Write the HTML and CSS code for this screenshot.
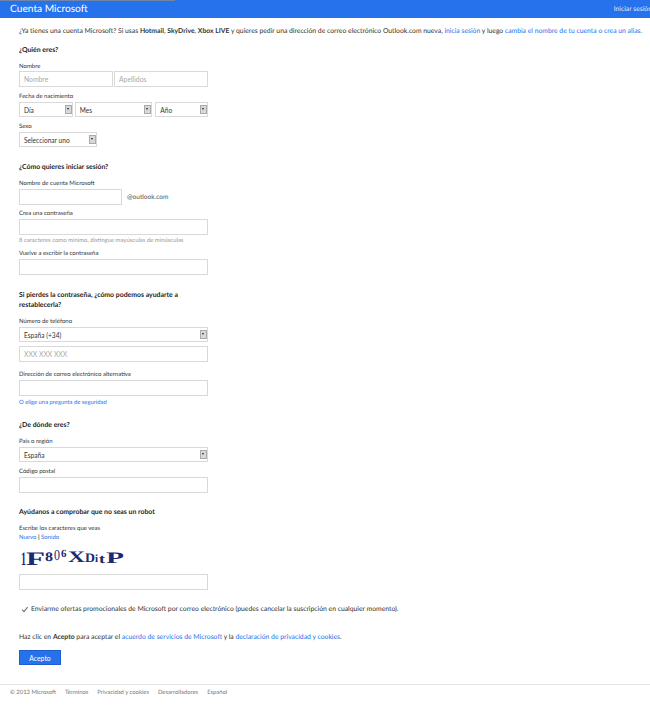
FILE: index.html
```html
<!DOCTYPE html>
<html lang="es">
<head>
    <meta charset="UTF-8">
    <title>Cuenta Microsoft</title>
    <link rel="stylesheet" href="styles.css">
</head>
<body>
    <header class="topbar">
        <span class="brand">Cuenta Microsoft</span>
        <a class="signin" href="#">Iniciar sesión</a>
    </header>

    <main class="page">
        <p class="intro">¿Ya tienes una cuenta Microsoft? Si usas <b>Hotmail</b>, <b>SkyDrive</b>, <b>Xbox LIVE</b> y quieres pedir una dirección de correo electrónico Outlook.com nueva, <a href="#">inicia sesión</a> y luego <a href="#">cambia el nombre de tu cuenta o crea un alias.</a></p>

        <form class="form">
            <section class="group group-who">
                <h2>¿Quién eres?</h2>
                <label class="lbl">Nombre</label>
                <div class="row">
                    <input class="field half" type="text" placeholder="Nombre">
                    <input class="field half" type="text" placeholder="Apellidos">
                </div>
                <label class="lbl">Fecha de nacimiento</label>
                <div class="row row-date">
                    <div class="sel sel-day"><select><option>Día</option></select><i class="arrow"></i></div>
                    <div class="sel sel-month"><select><option>Mes</option></select><i class="arrow"></i></div>
                    <div class="sel sel-year"><select><option>Año</option></select><i class="arrow"></i></div>
                </div>
                <label class="lbl">Sexo</label>
                <div class="sel sel-sex"><select><option>Seleccionar uno</option></select><i class="arrow"></i></div>
            </section>

            <section class="group group-signin">
                <h2>¿Cómo quieres iniciar sesión?</h2>
                <label class="lbl">Nombre de cuenta Microsoft</label>
                <div class="row row-account">
                    <input class="field account" type="text">
                    <span class="domain">@outlook.com</span>
                </div>
                <label class="lbl">Crea una contraseña</label>
                <input class="field" type="password">
                <p class="hint">8 caracteres como mínimo, distingue mayúsculas de minúsculas</p>
                <label class="lbl">Vuelve a escribir la contraseña</label>
                <input class="field" type="password">
            </section>

            <section class="group group-recover">
                <h2>Si pierdes la contraseña, ¿cómo podemos ayudarte a restablecerla?</h2>
                <label class="lbl">Número de teléfono</label>
                <div class="sel"><select><option>España (+34)</option></select><i class="arrow"></i></div>
                <input class="field phone" type="text" placeholder="XXX XXX XXX">
                <label class="lbl lbl-alt">Dirección de correo electrónico alternativa</label>
                <input class="field" type="text">
                <p class="small-link"><a href="#">O elige una pregunta de seguridad</a></p>
            </section>

            <section class="group group-where">
                <h2>¿De dónde eres?</h2>
                <label class="lbl">País o región</label>
                <div class="sel"><select><option>España</option></select><i class="arrow"></i></div>
                <label class="lbl">Código postal</label>
                <input class="field" type="text">
            </section>

            <section class="group">
                <h2>Ayúdanos a comprobar que no seas un robot</h2>
                <label class="lbl">Escribe los caracteres que veas</label>
                <p class="captcha-links"><a href="#">Nuevo</a> <b>|</b> <a href="#">Sonido</a></p>
                <svg class="captcha" width="110" height="24" viewBox="0 0 110 24">
                    <text x="2" y="18" class="c-tall" textLength="5" lengthAdjust="spacingAndGlyphs">1</text>
                    <text x="7" y="18" class="c-tall" textLength="19" lengthAdjust="spacingAndGlyphs">F</text>
                    <text x="26" y="14" class="c-digit" textLength="8" lengthAdjust="spacingAndGlyphs">8</text>
                    <text x="35" y="13" class="c-thin" textLength="6" lengthAdjust="spacingAndGlyphs">0</text>
                    <text x="42" y="10" class="c-small">6</text>
                    <text x="49" y="15" class="c-big" textLength="17" lengthAdjust="spacingAndGlyphs">X</text>
                    <text x="66" y="15" class="c-mid" textLength="10" lengthAdjust="spacingAndGlyphs">D</text>
                    <text x="76" y="15" class="c-small">i</text>
                    <text x="80" y="16" class="c-mid" textLength="6" lengthAdjust="spacingAndGlyphs">t</text>
                    <text x="87" y="16" class="c-big" textLength="18" lengthAdjust="spacingAndGlyphs">P</text>
                </svg>
                <input class="field" type="text">
            </section>

            <label class="optin">
                <svg class="tick" width="9" height="9" viewBox="0 0 9 9"><path d="M1.2 4.6 L3 6.6 L6.6 2.2" fill="none" stroke="#777" stroke-width="1.2"/></svg>
                <span>Enviarme ofertas promocionales de Microsoft por correo electrónico (puedes cancelar la suscripción en cualquier momento).</span>
            </label>

            <p class="terms">Haz clic en <b>Acepto</b> para aceptar el <a href="#">acuerdo de servicios de Microsoft</a> y la <a href="#">declaración de privacidad y cookies</a>.</p>
            <button class="accept" type="button">Acepto</button>
        </form>
    </main>

    <footer class="foot">
        <span>© 2013 Microsoft</span>
        <a href="#">Términos</a>
        <a href="#">Privacidad y cookies</a>
        <a href="#">Desarrolladores</a>
        <a href="#">Español</a>
    </footer>
</body>
</html>
```

FILE: styles.css
```css
* {
    box-sizing: border-box;
}

html, body {
    margin: 0;
    padding: 0;
}

body {
    position: relative;
    width: 650px;
    height: 706px;
    overflow: hidden;
    background-color: #fff;
    color: #333;
    font-family: Lato, "Open Sans", sans-serif;
    font-size: 6.8px;
    text-rendering: geometricPrecision;
}

a {
    color: #2672ec;
    text-decoration: none;
}

.topbar {
    position: relative;
    height: 18px;
    background-color: #2672ec;
    color: #fff;
    display: flex;
    justify-content: space-between;
    align-items: center;
    padding-left: 10px;
    white-space: nowrap;
}

.topbar::before {
    content: "";
    position: absolute;
    left: 0;
    top: 0;
    width: 175px;
    height: 1px;
    background-color: #6f86a8;
}

.brand {
    font-size: 10.2px;
}

.signin {
    color: #dfe9fb;
    font-size: 6.8px;
    margin-right: -2px;
}

.page {
    padding: 0 0 0 19px;
}

.intro {
    margin: 9px 0 0;
    line-height: 9px;
    white-space: nowrap;
}

.form {
    width: 189px;
}

.group {
    margin-top: 14px;
}

.group-who {
    margin-top: 9px;
}

.group-signin,
.group-recover {
    margin-top: 15px;
}

.group-where {
    margin-top: 13px;
}

h2 {
    margin: 0;
    font-size: 6.9px;
    line-height: 10px;
    font-weight: 700;
    color: #222;
}

.lbl {
    display: block;
    font-size: 6px;
    line-height: 9px;
    margin-top: 5px;
    margin-bottom: 1px;
}

h2 + .lbl {
    margin-top: 7px;
}

.group-who h2 + .lbl {
    margin-bottom: 0;
}

.row {
    display: flex;
    gap: 1px;
}

.field {
    display: block;
    width: 100%;
    height: 16px;
    border: 1px solid #d9d9d9;
    padding: 0 4px;
    margin: 0;
    font-family: inherit;
    font-size: 6.8px;
    background-color: #fff;
    outline: none;
}

.field::placeholder {
    color: #aaa;
    opacity: 1;
}

.half {
    width: 94px;
}

.row-date {
    gap: 2px;
}

.sel {
    position: relative;
    width: 189px;
    height: 15px;
}

.sel select {
    display: block;
    width: 100%;
    height: 100%;
    appearance: none;
    border: 1px solid #d9d9d9;
    border-radius: 0;
    padding: 0 4px;
    background-color: #fff;
    color: #333;
    font-family: inherit;
    font-size: 6.6px;
}

.arrow {
    position: absolute;
    right: 1px;
    top: 3px;
    width: 7px;
    height: 9px;
    background-color: #d8d8d8;
    border: 1px solid #aaa;
}

.arrow::after {
    content: "";
    position: absolute;
    left: 1px;
    top: 2px;
    border-left: 1.5px solid transparent;
    border-right: 1.5px solid transparent;
    border-top: 2px solid #222;
}

.sel-day {
    width: 54px;
}

.sel-month {
    width: 78px;
}

.sel-year {
    width: 53px;
    margin-left: 1px;
}

.sel-sex {
    width: 78px;
}

.account {
    width: 103px;
}

.row-account {
    align-items: center;
    margin-bottom: -1px;
    white-space: nowrap;
}

.domain {
    margin-left: 4px;
    color: #555;
    font-size: 6.6px;
}

.hint {
    margin: 2px 0 0;
    font-size: 5.95px;
    line-height: 7px;
    color: #999;
    white-space: nowrap;
}

.phone {
    margin-top: 4px;
}

.lbl-alt {
    margin-top: 8px;
}

.small-link {
    margin: 2px 0 0;
    font-size: 5.85px;
    line-height: 9px;
}

.captcha-links {
    margin: 0;
    font-size: 6px;
    line-height: 8px;
}

.captcha {
    display: block;
    margin-top: 5px;
    margin-bottom: 3px;
    overflow: visible;
}

.captcha text {
    fill: #1c2a72;
    font-family: "Liberation Serif", serif;
    font-weight: bold;
}

.c-tall {
    font-size: 19px;
}

.c-big {
    font-size: 16px;
}

.c-mid {
    font-size: 13px;
}

.c-digit {
    font-size: 13px;
}

.c-small {
    font-size: 11px;
}

.captcha .c-thin {
    font-size: 15px;
    font-weight: normal;
}

.optin {
    display: flex;
    align-items: center;
    gap: 1px;
    margin-top: 15px;
    margin-left: 2px;
    line-height: 9px;
    white-space: nowrap;
}

.tick {
    flex-shrink: 0;
}

.terms {
    margin: 19px 0 0;
    line-height: 9px;
    white-space: nowrap;
}

.accept {
    display: block;
    width: 42px;
    height: 15px;
    margin-top: 8px;
    padding: 0;
    border: 1px solid #1e5fd0;
    background-color: #2672ec;
    color: #fff;
    font-family: inherit;
    font-size: 6.8px;
}

.foot {
    position: absolute;
    left: 0;
    top: 684px;
    width: 650px;
    height: 22px;
    border-top: 1px solid #e5e5e5;
    padding: 3px 0 0 10px;
    display: flex;
    gap: 9px;
    font-size: 5.85px;
    line-height: 9px;
    color: #777;
}

.foot a {
    color: #777;
}
```
